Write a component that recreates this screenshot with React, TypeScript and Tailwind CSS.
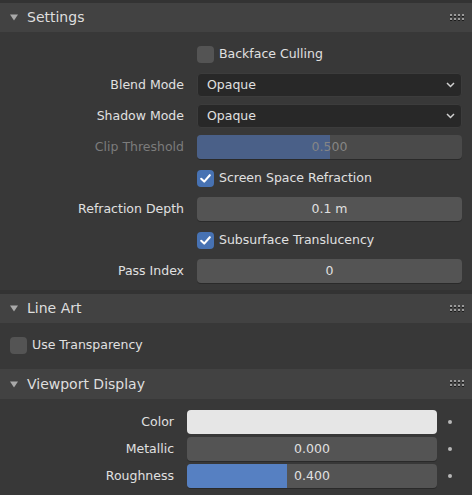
import type { ReactNode } from "react";

function Grip() {
  return (
    <svg width="14" height="8" viewBox="0 0 14 8" className="block">
      {[0, 4, 8, 12].map((x) =>
        [0, 4].map((y) => (
          <g key={`${x}-${y}`}>
            <rect x={x} y={y + 2} width="2" height="1" fill="#1c1c1c" />
            <rect x={x} y={y} width="2" height="2" fill="#9a9a9a" />
          </g>
        ))
      )}
    </svg>
  );
}

function PanelHeader({ title, tall }: { title: string; tall?: boolean }) {
  return (
    <div
      className={`flex items-center bg-[#424242] pl-[10px] pr-[8px] ${tall ? "h-[30px]" : "h-[29px]"}`}
    >
      <svg width="8" height="7" viewBox="0 0 8 7" className="mr-[9px]">
        <path d="M0 0.5 L8 0.5 L4 6.5 Z" fill="#a9a9a9" />
      </svg>
      <span className="text-[14px] text-[#dedede]">{title}</span>
      <div className="ml-auto">
        <Grip />
      </div>
    </div>
  );
}

function Checkbox({ checked }: { checked?: boolean }) {
  return (
    <div
      className={`flex h-[17px] w-[17px] shrink-0 items-center justify-center rounded-[4px] ${
        checked ? "bg-[#4772b3]" : "bg-[#545454]"
      }`}
    >
      {checked && (
        <svg width="13" height="13" viewBox="0 0 13 13">
          <path
            d="M2.2 6.8 L5.2 9.6 L10.8 3.2"
            fill="none"
            stroke="#ffffff"
            strokeWidth="2.1"
            strokeLinecap="round"
            strokeLinejoin="round"
          />
        </svg>
      )}
    </div>
  );
}

function CheckRow({ label, checked }: { label: string; checked?: boolean }) {
  return (
    <div className="flex h-[24px] items-center gap-[5px]">
      <Checkbox checked={checked} />
      <span className="text-[#e0e0e0]">{label}</span>
    </div>
  );
}

function Dropdown({ value }: { value: string }) {
  return (
    <div className="flex h-[24px] items-center rounded-[4px] border border-[#3c3c3c] bg-[#282828] pl-[9px] pr-[6px] text-[#e0e0e0]">
      <span>{value}</span>
      <svg width="9" height="6" viewBox="0 0 9 6" className="ml-auto">
        <path d="M1 1 L4.5 4.5 L8 1" fill="none" stroke="#d0d0d0" strokeWidth="1.5" />
      </svg>
    </div>
  );
}

function Field({
  value,
  fill,
  disabled,
  fillColor = "#5680c2",
}: {
  value: string;
  fill?: number;
  disabled?: boolean;
  fillColor?: string;
}) {
  return (
    <div
      className={`relative flex h-[24px] items-center justify-center overflow-hidden rounded-[4px] shadow-[0_1px_0_#2a2a2a] ${
        disabled ? "bg-[#4a4a4a]" : "bg-[#545454]"
      }`}
    >
      {fill !== undefined && (
        <div
          className="absolute inset-y-0 left-0"
          style={{ width: `${fill * 100}%`, background: fillColor }}
        />
      )}
      <span className={`relative ${disabled ? "text-[#858585]" : "text-[#e0e0e0]"}`}>{value}</span>
    </div>
  );
}

function Row({ label, children, dim }: { label?: string; children: ReactNode; dim?: boolean }) {
  return (
    <div className="grid h-[24px] grid-cols-[184px_265px] items-center gap-x-[13px]">
      <span className={`text-right ${dim ? "text-[#7c7c7c]" : "text-[#e0e0e0]"}`}>{label}</span>
      <div>{children}</div>
    </div>
  );
}

function ViewRow({ label, children }: { label: string; children: ReactNode }) {
  return (
    <div className="flex h-[24px] items-center">
      <span className="w-[174px] text-right text-[#e0e0e0]">{label}</span>
      <div className="ml-[13px] w-[250px]">{children}</div>
      <div className="ml-[11px] h-[4px] w-[4px] rounded-full bg-[#b8b8b8]" />
    </div>
  );
}

export default function App() {
  return (
    <div className="h-[495px] w-[472px] overflow-hidden bg-[#333333] pt-[3px] font-['DejaVu_Sans',sans-serif] text-[12.5px]">
      <PanelHeader title="Settings" />
      <div className="flex h-[258px] flex-col gap-[7px] bg-[#383838] pt-[10px]">
        <Row>
          <CheckRow label="Backface Culling" />
        </Row>
        <Row label="Blend Mode">
          <Dropdown value="Opaque" />
        </Row>
        <Row label="Shadow Mode">
          <Dropdown value="Opaque" />
        </Row>
        <Row label="Clip Threshold" dim>
          <Field value="0.500" fill={0.5} disabled fillColor="#4a6088" />
        </Row>
        <Row>
          <CheckRow label="Screen Space Refraction" checked />
        </Row>
        <Row label="Refraction Depth">
          <Field value="0.1 m" />
        </Row>
        <Row>
          <CheckRow label="Subsurface Translucency" checked />
        </Row>
        <Row label="Pass Index">
          <Field value="0" />
        </Row>
      </div>

      <div className="h-[4px]" />
      <PanelHeader title="Line Art" />
      <div className="flex h-[46px] items-start bg-[#383838] pl-[10px] pt-[10px]">
        <CheckRow label="Use Transparency" />
      </div>

      <PanelHeader title="Viewport Display" tall />
      <div className="flex h-[96px] flex-col gap-[3px] bg-[#383838] pt-[11px]">
        <ViewRow label="Color">
          <div className="h-[24px] rounded-[4px] bg-[#e6e6e6]" />
        </ViewRow>
        <ViewRow label="Metallic">
          <Field value="0.000" />
        </ViewRow>
        <ViewRow label="Roughness">
          <Field value="0.400" fill={0.4} />
        </ViewRow>
      </div>
    </div>
  );
}
